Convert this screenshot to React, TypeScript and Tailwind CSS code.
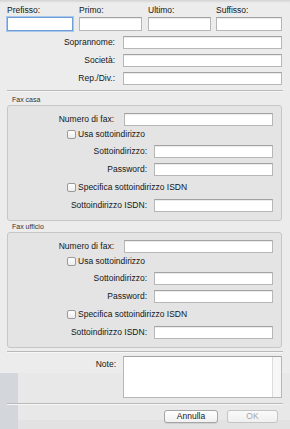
import React from "react";

const inputCls =
  "h-[13px] bg-white border border-[#b7b7b7] border-t-[#a2a2a2] shadow-[inset_0_1px_0_#ececec]";

function Field({ label, w = 159 }: { label: string; w?: number }) {
  return (
    <div className="flex items-center h-[13px]">
      <span className="w-[115px] text-right leading-none">{label}</span>
      <div className={`${inputCls} ml-[8px] w-[159px]`} style={{ width: w }} />
    </div>
  );
}

function Check({ label, h }: { label: string; h: string }) {
  return (
    <div className={`flex items-center ${h}`}>
      <span className="ml-[59px] w-[9px] h-[9px] rounded-[2px] border border-[#9a9a9a] bg-gradient-to-b from-white to-[#ededed]" />
      <span className="ml-[2px] leading-none">{label}</span>
    </div>
  );
}

function SubField({ label, h }: { label: string; h: string }) {
  return (
    <div className={`flex items-center ${h}`}>
      <span className="w-[139px] text-right leading-none">{label}</span>
      <div className={`${inputCls} ml-[7px] w-[119px]`} />
    </div>
  );
}

function FaxGroup() {
  return (
    <div className="mx-[7px] w-[275px] rounded-[3px] border border-[#c6c6c6] bg-[#e4e4e4] pt-[7px] pb-[5px] flex flex-col">
      <div className="flex items-center h-[13px]">
        <span className="w-[106px] text-right leading-none">Numero di fax:</span>
        <div className={`${inputCls} ml-[10px] w-[149px]`} />
      </div>
      <Check label="Usa sottoindirizzo" h="h-[17px]" />
      <SubField label="Sottoindirizzo:" h="h-[17px]" />
      <SubField label="Password:" h="h-[19px]" />
      <Check label="Specifica sottoindirizzo ISDN" h="h-[17px]" />
      <SubField label="Sottoindirizzo ISDN:" h="h-[19px]" />
    </div>
  );
}

function Separator() {
  return <div className="mx-[7px] h-px bg-[#b9b9b9] shadow-[0_1px_0_#f7f7f7]" />;
}

export default function App() {
  return (
    <div
      className="relative w-[290px] h-[429px] overflow-hidden bg-[#ececec] text-[8.5px] text-[#161616]"
      style={{ fontFamily: '"Liberation Sans", Arial, sans-serif' }}
    >
      {/* faint window behind the sheet */}
      <div className="absolute left-0 top-[373px] w-[18px] h-[56px] bg-[#d3d7dc]" />
      <div className="absolute left-[18px] top-[373px] w-[272px] h-[47px] bg-[#e8e8e8]" />
      <div className="absolute left-[18px] top-[420px] w-[272px] h-[9px] bg-[#e2e2e2]" />
      <div className="absolute left-0 top-0 w-full h-[3px] bg-gradient-to-b from-[#d2d2d2] to-transparent" />

      <div className="relative flex flex-col">
        {/* name row */}
        <div className="flex pl-[7px] pt-[5px] gap-[6px]">
          <div className="flex flex-col w-[66px]">
            <span className="h-[10px] leading-[10px]">Prefisso:</span>
            <div className="mt-[2px] h-[14px] bg-white border border-[#6f9fd8] shadow-[0_0_0_1px_#a8c7ea]" />
          </div>
          <div className="flex flex-col w-[63px]">
            <span className="h-[10px] leading-[10px]">Primo:</span>
            <div className={`${inputCls} mt-[2px] h-[14px]`} />
          </div>
          <div className="flex flex-col w-[63px]">
            <span className="h-[10px] leading-[10px]">Ultimo:</span>
            <div className={`${inputCls} mt-[2px] h-[14px]`} />
          </div>
          <div className="flex flex-col w-[66px] -ml-px">
            <span className="h-[10px] leading-[10px]">Suffisso:</span>
            <div className={`${inputCls} mt-[2px] h-[14px]`} />
          </div>
        </div>

        <div className="flex flex-col gap-[5px] mt-[5px]">
          <Field label="Soprannome:" />
          <Field label="Società:" />
          <Field label="Rep./Div.:" />
        </div>

        <div className="mt-[5px]">
          <Separator />
        </div>

        <div className="h-[14px] flex items-end pb-[1px] pl-[12px] text-[7px] text-[#333] leading-[8px]">
          Fax casa
        </div>
        <FaxGroup />

        <div className="h-[11px] flex items-center pl-[12px] text-[7px] text-[#333] leading-[8px]">
          Fax ufficio
        </div>
        <FaxGroup />

        <div className="mt-[3px]">
          <Separator />
        </div>

        <div className="flex mt-[4px]">
          <span className="w-[116px] text-right leading-none pt-[4px]">Note:</span>
          <div className="ml-[7px] w-[159px] h-[42px] bg-white border border-[#b7b7b7] border-t-[#a2a2a2] flex justify-end">
            <div className="w-[9px] h-full border-l border-[#dcdcdc] bg-[#f7f7f7]" />
          </div>
        </div>

        <div className="mt-[5px]">
          <Separator />
        </div>

        <div className="flex justify-end gap-[9px] pr-[12px] mt-[6px]">
          <div className="w-[54px] h-[13px] rounded-[3px] border border-[#a5a5a5] bg-gradient-to-b from-white to-[#f1f1f1] flex items-center justify-center leading-none shadow-[0_1px_0_#d0d0d0]">
            Annulla
          </div>
          <div className="w-[51px] h-[13px] rounded-[3px] border border-[#c4c4c4] bg-gradient-to-b from-[#fafafa] to-[#f0f0f0] flex items-center justify-center leading-none text-[#a6a6a6]">
            OK
          </div>
        </div>
      </div>
    </div>
  );
}
